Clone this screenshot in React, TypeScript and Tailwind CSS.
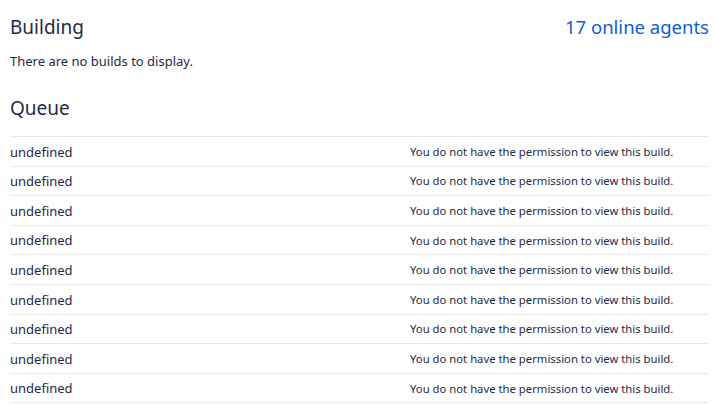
const rows = Array.from({ length: 9 }, (_, i) => i);

export default function App() {
  return (
    <div className="min-h-screen bg-white pl-[10px] pr-[8px] text-[#1f2a44] font-['Segoe_UI','Noto_Sans',sans-serif]">
      <div className="flex items-center justify-between pt-[13px]">
        <h2 className="text-[19px] leading-[28px]">Building</h2>
        <a href="#" className="text-[18.5px] leading-[28px] text-[#0b5ed7]">
          17 online agents
        </a>
      </div>
      <p className="mt-[11px] text-[13px] leading-[18px]">There are no builds to display.</p>

      <h2 className="mt-[24px] text-[19px] leading-[28px]">Queue</h2>

      <div className="mt-[14px] border-b border-[#e8e8e8]">
        {rows.map((i) => (
          <div key={i} className="grid h-[29.6px] grid-cols-[400px_1fr] items-center border-t border-[#e8e8e8] pt-[2px]">
            <span className="text-[13px]">undefined</span>
            <span className="text-[11.3px]">You do not have the permission to view this build.</span>
          </div>
        ))}
      </div>
    </div>
  );
}
